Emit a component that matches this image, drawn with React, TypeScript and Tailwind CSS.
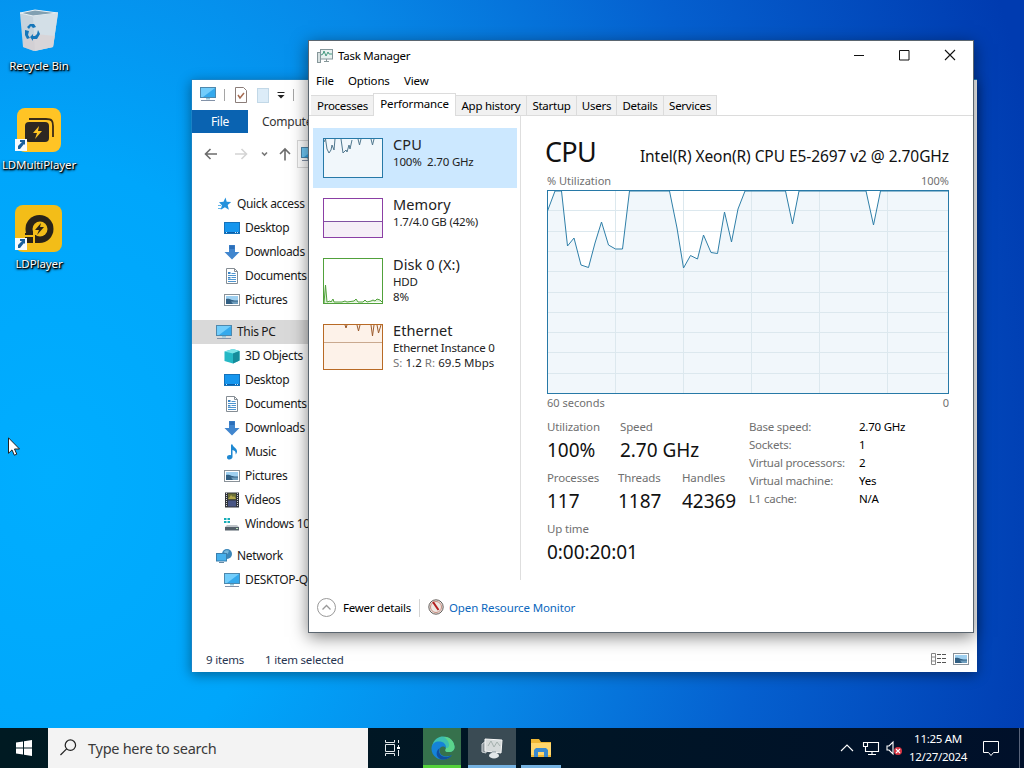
import type { ReactNode } from "react";
import clsx from "clsx";

type IconProps = { className?: string };

const UTILIZATION =
  "0.5,21 8,1 14.5,1 20.5,56 27,48 34,75 41.5,77.5 48,53 54.5,32 61.5,55 68.5,59 75.5,59 82.5,1 122.5,1 130,38 136.5,78 143.5,65.5 150.5,69 156.5,45 164,62.5 170.5,63.5 177.5,22 184.5,52 191,19 198,1 238.5,1 245.5,34 252,1 319,1 326.5,35 333.5,1 401.5,1";

function MonitorIcon({ className }: IconProps) {
  return (
    <svg viewBox="0 0 16 16" className={clsx("h-4 w-4 shrink-0", className)}>
      <rect x="0.5" y="1.5" width="15" height="10" fill="#35a9ec" stroke="#4d88ad" />
      <path d="M1 2h14L3 11H1z" fill="#72cdfb" />
      <path d="M6 12h4v1.5H6z" fill="#8fc6dc" />
      <path d="M1 14.5h14" stroke="#8392a8" />
    </svg>
  );
}

function StarIcon() {
  return (
    <svg viewBox="0 0 16 16" className="h-4 w-4 shrink-0">
      <path d="M9.5 1.5l1.2 4.2 4.5.3-3.5 3 1.2 4.8-4-2.5-4.200 2.400 1.200-4.500L3 6.300l4.500-.5z" fill="#2391dc" />
      <path d="M2 9.5h3M2 12.5h3" stroke="#63b5e9" />
    </svg>
  );
}

function DesktopIcon() {
  return (
    <svg viewBox="0 0 16 16" className="h-4 w-4 shrink-0">
      <rect x="0.5" y="2.5" width="15" height="11" fill="#1696ee" stroke="#1472bb" />
      <path d="M1 12.5h14" stroke="#0b5da8" />
      <path d="M2 12.5h1M11 12.5h1M13 12.5h1" stroke="#c8e9ff" />
    </svg>
  );
}

function DownloadIcon() {
  return (
    <svg viewBox="0 0 16 16" className="h-4 w-4 shrink-0">
      <path d="M5 1h6v7h4.5L8 15.5.5 8H5z" fill="#4186ce" />
      <path d="M5.5 1.5h5V5h-5z" fill="#2c6fb9" />
    </svg>
  );
}

function DocumentIcon() {
  return (
    <svg viewBox="0 0 16 16" className="h-4 w-4 shrink-0">
      <path d="M2.5.5h8l3 3v12h-11z" fill="#fff" stroke="#858d94" />
      <path d="M10.5 .5v3h3" fill="none" stroke="#858d94" />
      <path d="M7.5 5.5h4M4 7.5h8M7.5 9.5h4.5M4 11.5h8M4 13.5h8" stroke="#4f95cf" />
      <path d="M4 4h2.5v2H4zM4 9h2.5v1.5H4z" fill="#3b83c4" />
    </svg>
  );
}

function PictureIcon({ className }: IconProps) {
  return (
    <svg viewBox="0 0 16 16" className={clsx("h-4 w-4 shrink-0", className)}>
      <rect x="0.5" y="2.5" width="15" height="11" fill="#fff" stroke="#8a9299" />
      <rect x="2" y="4" width="12" height="8" fill="#9fd0f0" />
      <path d="M2 7c4-1 5 2 12 1.5V12H2z" fill="#315f83" />
      <path d="M7 9.5h7V12H9z" fill="#6e9dbd" />
    </svg>
  );
}

function CubeIcon() {
  return (
    <svg viewBox="0 0 16 16" className="h-4 w-4 shrink-0">
      <path d="M.5 3.5L9 1l6.5 2v9.5L9 15.5.5 13z" fill="#25b8c5" />
      <path d="M.5 3.5L9 1l6.5 2L9 5.5z" fill="#7be3e8" />
      <path d="M9 5.5L15.5 3v9.5L9 15.5z" fill="#158c9b" />
    </svg>
  );
}

function MusicIcon() {
  return (
    <svg viewBox="0 0 16 16" className="h-4 w-4 shrink-0">
      <path d="M7 .5h1.5c.5 3 5 3.5 4.5 7.5-.2 1.2-.8 2-1.5 2.5.7-3-1-4-3-4.5v7c0 3-5.5 3.5-5.5.5 0-2 2-2.8 4-2.2z" fill="#1e88d2" />
    </svg>
  );
}

function VideoIcon() {
  return (
    <svg viewBox="0 0 16 16" className="h-4 w-4 shrink-0">
      <path d="M1 0.5h14v15H1z" fill="#31343a" />
      <path d="M4 1.5h8v6H4z" fill="#6b6f36" />
      <path d="M4 8.5h8v6H4z" fill="#485584" />
      <path d="M5 6l2-3 2 2 1-1 2 3H4z" fill="#b2a64b" />
      <path d="M2.5 1v14M13.5 1v14" stroke="#d4d7da" strokeDasharray="1 1" />
    </svg>
  );
}

function DriveIcon() {
  return (
    <svg viewBox="0 0 16 16" className="h-4 w-4 shrink-0">
      <path d="M0 2h2.5v2H0zM3.5 2H6v2H3.5zM0 5h2.5v2H0zM3.5 5H6v2H3.5z" fill="#16adb8" />
      <path d="M3 9h10l2 2H1z" fill="#bfc5ca" />
      <path d="M1 11h14v3.5H1z" fill="#54606a" />
      <path d="M12 12.5h2" stroke="#b9e5b9" />
    </svg>
  );
}

function NetworkIcon() {
  return (
    <svg viewBox="0 0 16 16" className="h-4 w-4 shrink-0">
      <circle cx="11" cy="6" r="5" fill="#3a86b9" />
      <path d="M8 3.5c2-2 4-1 5-1l-1 3-3 1z" fill="#77b8dc" />
      <rect x="0.5" y="5.5" width="10" height="7.5" fill="#46b0ec" stroke="#397fae" />
      <path d="M3 14.5h5" stroke="#6589a5" />
    </svg>
  );
}

function TaskManagerIcon({ className }: IconProps) {
  return (
    <svg viewBox="0 0 16 16" className={clsx("h-4 w-4 shrink-0", className)}>
      <rect x="0.5" y="4.5" width="3" height="10" fill="#d8e1e1" stroke="#87979a" />
      <rect x="3.5" y="1.5" width="12" height="9.5" fill="#e7f1ef" stroke="#84979b" />
      <path d="M4 7l2-1 1-3 2 5 2-4 1 2h3" fill="none" stroke="#469b81" />
      <path d="M7 13.5h5M9.5 11v2" stroke="#87979a" />
    </svg>
  );
}

const sidebar: { label: string; icon: ReactNode; root?: boolean; active?: boolean }[][] = [
  [
    { label: "Quick access", icon: <StarIcon />, root: true },
    { label: "Desktop", icon: <DesktopIcon /> },
    { label: "Downloads", icon: <DownloadIcon /> },
    { label: "Documents", icon: <DocumentIcon /> },
    { label: "Pictures", icon: <PictureIcon /> },
  ],
  [
    { label: "This PC", icon: <MonitorIcon />, root: true, active: true },
    { label: "3D Objects", icon: <CubeIcon /> },
    { label: "Desktop", icon: <DesktopIcon /> },
    { label: "Documents", icon: <DocumentIcon /> },
    { label: "Downloads", icon: <DownloadIcon /> },
    { label: "Music", icon: <MusicIcon /> },
    { label: "Pictures", icon: <PictureIcon /> },
    { label: "Videos", icon: <VideoIcon /> },
    { label: "Windows 10", icon: <DriveIcon /> },
  ],
  [
    { label: "Network", icon: <NetworkIcon />, root: true },
    { label: "DESKTOP-QO", icon: <MonitorIcon /> },
  ],
];

function Explorer() {
  return (
    <div className="absolute left-[191px] top-[79px] flex h-[593px] w-[786px] flex-col border-l border-t border-[#1883c7] bg-white shadow-[0_3px_12px_rgba(0,0,0,0.4)]">
      <div className="flex h-[30px] items-center pl-2">
        <MonitorIcon className="-mt-[2px]" />
        <div className="ml-2 h-3 w-px bg-[#a5a5a5]" />
        <svg viewBox="0 0 16 16" className="ml-2 h-4 w-4">
          <path d="M2.5 .5h8l3 3v12h-11z" fill="#fff" stroke="#8b7d79" />
          <path d="M5 8l2 3 4-5" fill="none" stroke="#a56a50" strokeWidth="1.5" />
        </svg>
        <div className="ml-2 h-[15px] w-3 border border-[#c2d8e7] bg-[#dcecf8]" />
        <svg viewBox="0 0 8 8" className="ml-2 h-2 w-2">
          <path d="M0.5 1.5h7" stroke="#222" />
          <path d="M0.5 4h7L4 7.5z" fill="#222" />
        </svg>
        <div className="ml-2 h-3 w-px bg-[#a5a5a5]" />
      </div>
      <div className="flex h-[23px] text-[12px] leading-[24px] tracking-[-0.25px]">
        <div className="w-14 bg-[#0a63b1] text-center text-white">File</div>
        <div className="pl-[14px] text-[#333]">Computer</div>
      </div>
      <div className="flex h-[42px] items-center">
        <svg viewBox="0 0 105 30" className="h-[30px] w-[105px] shrink-0" fill="none" strokeWidth="1.6">
          <path d="M25 15H14M18.5 10l-5 5 5 5" stroke="#6c6c6c" />
          <path d="M43 15h11M49.5 10l5 5-5 5" stroke="#d4d4d4" />
          <path d="M70 13.5l2.5 2.5L75 13.5" stroke="#777" />
          <path d="M93 21.5V10.5M88 15l5-5 5 5" stroke="#6c6c6c" />
        </svg>
        <div className="flex h-7 w-[500px] items-center border border-[#d9d9d9] pl-[3px]">
          <MonitorIcon />
        </div>
      </div>
      <div className="flex h-[473px] w-[180px] flex-col gap-2 pt-[17px] text-[12px] tracking-[-0.34px] text-[#1a1a1a]">
        {sidebar.map((group, i) => (
          <div key={i}>
            {group.map((item) => (
              <div
                key={item.label}
                className={clsx(
                  "flex h-6 items-center gap-[5px] whitespace-nowrap",
                  item.root ? "pl-6" : "pl-8",
                  item.active && "bg-[#d9d9d9]"
                )}
              >
                {item.icon}
                <span>{item.label}</span>
              </div>
            ))}
          </div>
        ))}
      </div>
      <div className="flex h-6 items-center pl-[14px] pr-2 text-[11.5px] tracking-[-0.2px] text-[#26344f]">
        <span>9 items</span>
        <span className="ml-[21px]">1 item selected</span>
        <svg viewBox="0 0 16 14" className="-mt-[3px] ml-auto h-[14px] w-4">
          <path d="M.5 1.5h4v11h-4zM.5 5h4M.5 9h4" fill="none" stroke="#888" />
          <path d="M6 2.5h10M6 6.5h10M6 10.5h10" stroke="#555" strokeDasharray="4 1" />
        </svg>
        <PictureIcon className="-mt-[3px] ml-[6px]" />
      </div>
    </div>
  );
}

function DeviceRow({ title, lines, chart, className, selected }: {
  title: string;
  lines: ReactNode[];
  chart: ReactNode;
  className: string;
  selected?: boolean;
}) {
  return (
    <div className={clsx("flex w-[204px] gap-[10px] pl-[10px]", selected && "bg-[#cce8ff]", className)}>
      {chart}
      <div className="whitespace-pre text-[#222]">
        <div className="pb-[2px] text-[14.5px] leading-[16px] tracking-[0.1px]">{title}</div>
        {lines.map((line, i) => (
          <div key={i} className="text-[11.5px] leading-[15px] tracking-[-0.2px]">{line}</div>
        ))}
      </div>
    </div>
  );
}

function CpuChart() {
  const columns = [68.5, 136.5, 204.5, 272.5, 340.5];
  const rows = [1, 2, 3, 4, 5, 6, 7, 8, 9];
  return (
    <svg viewBox="0 0 402 204" className="h-[204px] w-[402px]">
      <polygon points={`0,203 ${UTILIZATION} 402,203`} fill="#f1f7fb" />
      {columns.map((x) => (
        <path key={x} d={`M${x} 0v203`} stroke="#dce8ee" />
      ))}
      {rows.map((n) => (
        <path key={n} d={`M0 ${Math.round(n * 20.3) + 0.5}h402`} stroke="#dce8ee" />
      ))}
      <polyline points={UTILIZATION} fill="none" stroke="#2f7fa8" />
      <rect x="0.5" y="0.5" width="401" height="203" fill="none" stroke="#2779a7" />
    </svg>
  );
}

function Stat({ label, value, className }: { label: string; value: string; className?: string }) {
  return (
    <div className={className}>
      <div className="text-[11.5px] leading-4 tracking-[-0.15px] text-[#707070]">{label}</div>
      <div className="text-[19px] leading-[30px] tracking-[-0.05px] text-[#111]">{value}</div>
    </div>
  );
}

const details = [
  ["Base speed:", "2.70 GHz"],
  ["Sockets:", "1"],
  ["Virtual processors:", "2"],
  ["Virtual machine:", "Yes"],
  ["L1 cache:", "N/A"],
];

const tabs = [
  { label: "Processes", width: "w-[62px]" },
  { label: "Performance", width: "w-[83px]", active: true },
  { label: "App history", width: "w-[71px]" },
  { label: "Startup", width: "w-[50px]" },
  { label: "Users", width: "w-[40px]" },
  { label: "Details", width: "w-[47px]" },
  { label: "Services", width: "w-[53px]" },
];

function TaskManager() {
  return (
    <div className="absolute left-[308px] top-[40px] flex h-[593px] w-[666px] flex-col border border-[#5b6670] bg-white text-[11.5px] text-black shadow-[0_4px_16px_rgba(0,0,0,0.5)]">
      <div className="flex h-[30px] items-center pl-2">
        <TaskManagerIcon />
        <span className="ml-[5px] tracking-[-0.25px]">Task Manager</span>
        <svg viewBox="0 0 120 20" className="-mt-[2px] ml-auto mr-2 h-5 w-[120px]" fill="none" stroke="#111">
          <path d="M9 10.5h10" />
          <path d="M54.5 5.5h9.500v9.500h-9.500z" />
          <path d="M100 5l10 10M110 5l-10 10" strokeWidth="1.1" />
        </svg>
      </div>
      <div className="flex h-[21px] items-center pb-[2px] pl-[7px] tracking-[-0.15px]">
        <span className="w-8">File</span>
        <span className="w-14">Options</span>
        <span>View</span>
      </div>
      <div className="flex h-6 items-end border-b border-[#dcdcdc] pl-[2px] tracking-[-0.26px]">
        {tabs.map((tab) => (
          <div
            key={tab.label}
            className={clsx(
              "border-[#dcdcdc] text-center whitespace-nowrap",
              tab.width,
              tab.active
                ? "-ml-px -mb-px h-[23px] border-x border-t bg-white leading-[19px] tracking-[-0.15px]"
                : "h-5 border-r border-t bg-[#f1f1f1] leading-[20px] first:w-[63px] first:pl-px"
            )}
          >
            {tab.label}
          </div>
        ))}
      </div>
      <div className="flex h-[467px]">
        <div className="h-[464px] w-[212px] border-r border-[#dedede] pl-1 pt-[12px]">
          <DeviceRow
            selected
            className="h-[60px] pt-2"
            title="CPU"
            lines={["100%  2.70 GHz"]}
            chart={
              <svg viewBox="0 0 60 41" className="mt-[2px] h-[41px] w-[60px]">
                <rect x="0.5" y="0.5" width="59" height="39" fill="#f1f7fb" stroke="#2779a7" />
                <path d="M1 4l1.5-3 1.5 10 2 4 2-3 1-5 2 5 1-11M18 1l2 14 3-3 1 2 2-7 1 4 2-9M35 1l1.5 6L38 1M48 1l1.5 6L51 1" fill="none" stroke="#50778e" />
              </svg>
            }
          />
          <DeviceRow
            className="mt-[3px] h-[60px] pt-[5px]"
            title="Memory"
            lines={["1.7/4.0 GB (42%)"]}
            chart={
              <svg viewBox="0 0 60 41" className="mt-[2px] h-[41px] w-[60px]">
                <rect x="0.5" y="0.5" width="59" height="39" fill="#fff" stroke="#8b3fa5" />
                <path d="M1 23.5h58V39H1z" fill="#f5eff7" />
                <path d="M1 23.5h58" stroke="#8053a2" />
              </svg>
            }
          />
          <DeviceRow
            className="h-[66px] pt-[5px]"
            title="Disk 0 (X:)"
            lines={["HDD", "8%"]}
            chart={
              <svg viewBox="0 0 60 46" className="mt-[2px] h-[46px] w-[60px]">
                <rect x="0.5" y="0.5" width="59" height="45" fill="#fff" stroke="#51a13b" />
                <path d="M1 45l1.5-18L4 44l3-1 1 1 2-3 1 3h8l3-1 2 1 7-1 2-2 2 3h5l2-2 2 2 4-1 2-1 2 1 2-2 3 1 2 2" fill="#dcf0d6" stroke="#51a13b" />
              </svg>
            }
          />
          <DeviceRow
            className="pt-[5px]"
            title="Ethernet"
            lines={[
              "Ethernet Instance 0",
              <span className="tracking-[0.03px]">
                <span className="text-[#777]">S:</span> 1.2 <span className="text-[#777]">R:</span> 69.5 Mbps
              </span>,
            ]}
            chart={
              <svg viewBox="0 0 60 46" className="mt-[2px] h-[46px] w-[60px]">
                <rect x="0.5" y="0.5" width="59" height="45" fill="#fdf2e9" stroke="#b86a25" />
                <path d="M1 18.5h58" stroke="#c9a98f" />
                <path d="M22 1l1 3 1-3M34 1l1.5 6L37 1M48 1l1.5 11L51 1M54 1l1.5 8L58 1" fill="none" stroke="#9b5b2d" />
              </svg>
            }
          />
        </div>
        <div className="w-[428px] pl-[26px] pt-[18px]">
          <div className="-ml-[2px] flex h-9 w-[404px] items-baseline justify-between whitespace-nowrap text-[#111]">
            <span className="text-[27px] leading-[36px] tracking-[-0.7px]">CPU</span>
            <span className="text-[15.5px] tracking-[-0.07px]">Intel(R) Xeon(R) CPU E5-2697 v2 @ 2.70GHz</span>
          </div>
          <div className="flex h-5 w-[402px] items-center justify-between pt-[2px] text-[11px] text-[#707070]">
            <span>% Utilization</span>
            <span>100%</span>
          </div>
          <CpuChart />
          <div className="flex h-5 w-[402px] items-center justify-between pb-[2px] text-[11px] text-[#707070]">
            <span>60 seconds</span>
            <span>0</span>
          </div>
          <div className="mt-1 flex w-[402px]">
            <div className="w-[202px] pt-px whitespace-nowrap">
              <div className="flex h-[51px]">
                <Stat label="Utilization" value="100%" className="w-[73px]" />
                <Stat label="Speed" value="2.70 GHz" />
              </div>
              <div className="flex h-[51px]">
                <Stat label="Processes" value="117" className="w-[71px]" />
                <Stat label="Threads" value="1187" className="w-[64px]" />
                <Stat label="Handles" value="42369" />
              </div>
              <Stat label="Up time" value="0:00:20:01" />
            </div>
            <div className="text-[11.5px] leading-[18px] tracking-[-0.23px] whitespace-nowrap">
              {details.map(([label, value]) => (
                <div key={label} className="flex">
                  <span className="w-[110px] text-[#707070]">{label}</span>
                  <span>{value}</span>
                </div>
              ))}
            </div>
          </div>
        </div>
      </div>
      <div className="flex h-[49px] items-center pl-[7px]">
        <svg viewBox="0 0 20 20" className="h-5 w-5" fill="none" stroke="#999">
          <circle cx="10.5" cy="9.5" r="9" />
          <path d="M6.5 11.5l4-4 4 4" strokeWidth="1.3" />
        </svg>
        <span className="ml-[7px] w-[69px] whitespace-nowrap tracking-[-0.23px]">Fewer details</span>
        <div className="ml-[7px] h-[18px] w-px bg-[#d4d4d4]" />
        <svg viewBox="0 0 16 16" className="-mt-px ml-2 h-4 w-4">
          <circle cx="8" cy="8" r="7.2" fill="#eee8e3" stroke="#655f5c" />
          <circle cx="8" cy="8" r="5.5" fill="none" stroke="#c78c80" />
          <path d="M5 3l5.5 8" stroke="#b41f20" strokeWidth="2" />
        </svg>
        <span className="ml-[5px] tracking-[-0.12px] text-[#0c67bd]">Open Resource Monitor</span>
      </div>
    </div>
  );
}

function Shortcut() {
  return (
    <>
      <path d="M0 34h12v12H0z" fill="#f7fbff" />
      <path d="M3 44v-3l4-4H5v-2h5v5l-1-1-4 5z" fill="#195f9b" />
    </>
  );
}

function DesktopIcons() {
  return (
    <div className="absolute left-0 top-[7px] flex w-[78px] flex-col text-center text-[11.5px] leading-[18px] tracking-[-0.1px] text-white [text-shadow:1px_1px_1px_#000,1px_1px_2px_#000,0_1px_3px_#000]">
      <div className="flex h-[98px] flex-col items-center">
        <svg viewBox="0 0 48 48" className="h-12 w-12">
          <path d="M5 6l15-3 23 3-5 34-19 4-11-4z" fill="#c5d3dd" />
          <path d="M5 6l13 3 25-3-23-3z" fill="#81a0b2" stroke="#e8eff3" />
          <path d="M18 9l25-3-5 34-18 4z" fill="#d3dfe7" />
          <path d="M9 32l11-5 20 2-2 11-19 4-11-4z" fill="#dccfce" opacity=".6" />
          <path d="M12 20l3-3h4l2 3-3 1-2-2-2 3zM10 23l4 1-1 4 2 3-3 1-2-4zM23 23l2 4-3 5h-4v2l-3-4 3-3v2h2l2-2z" fill="#1677ba" />
        </svg>
        <span className="mt-[2px]">Recycle Bin</span>
      </div>
      <div className="flex h-[99px] flex-col items-center">
        <svg viewBox="0 0 48 48" className="h-12 w-12">
          <rect x="2" y="3" width="44" height="44" rx="8" fill="#ffc425" />
          <path d="M14 14h17c6 0 7 2 7 7v11" fill="none" stroke="#3a2b17" strokeWidth="1.8" />
          <rect x="10" y="17" width="24" height="20" rx="4" fill="#2d2722" />
          <path d="M24 21l-6 7h4l-2 6 7-8h-4z" fill="#ffc425" />
          <Shortcut />
        </svg>
        <span className="mt-[3px] whitespace-nowrap">LDMultiPlayer</span>
      </div>
      <div className="flex flex-col items-center">
        <svg viewBox="0 0 48 48" className="h-12 w-12">
          <rect x="0" y="1" width="47" height="47" rx="8" fill="#f3bd18" />
          <circle cx="24.5" cy="25" r="14" fill="#292319" />
          <path d="M10 29h14v10H10z" fill="#292319" />
          <circle cx="25" cy="25" r="7.5" fill="#f3bd18" />
          <path d="M19 28v12M10 32h9" stroke="#f3bd18" strokeWidth="2" />
          <path d="M26 19l-6 7h4l-2 5 7-8h-4z" fill="#292319" />
          <Shortcut />
        </svg>
        <span className="mt-[3px]">LDPlayer</span>
      </div>
    </div>
  );
}

function Taskbar() {
  return (
    <div className="absolute bottom-0 left-0 flex h-10 w-full bg-gradient-to-r from-[#001a22] via-[#001625] to-[#00102a]">
      <div className="flex w-12 items-center justify-center">
        <svg viewBox="0 0 16 16" className="h-4 w-4" fill="#fff">
          <path d="M0 2.5l7-1v6H0zM8 1.3L16 0v7.5H8zM0 8.5h7v6l-7-1zM8 8.5h8V16l-8-1.3z" />
        </svg>
      </div>
      <div className="flex w-80 items-center bg-[#f3f3f3] pl-3 pt-px text-[14.5px] tracking-[-0.27px] text-[#3a3a3a]">
        <svg viewBox="0 0 18 18" className="-mt-[2px] mr-[11px] h-[17px] w-[17px]" fill="none" stroke="#222" strokeWidth="1.3">
          <circle cx="11" cy="6.5" r="5.5" />
          <path d="M7 10.5L.5 17" />
        </svg>
        Type here to search
      </div>
      <div className="flex w-12 items-center justify-center">
        <svg viewBox="0 0 18 18" className="h-[18px] w-[18px]" fill="none" stroke="#e3e9eb">
          <path d="M2.5 5.5h9v7h-9zM2.5 1v2.5h9V1M2.5 17v-2.5h9V17M15.5 1v3M15.5 6v2M15.5 11v6" />
          <path d="M14 8h3v2h-3z" fill="#fff" stroke="none" />
        </svg>
      </div>
      <div className="ml-[7px] flex w-[38px] items-center justify-center border-b-[3px] border-[#55d13b] bg-[#36714c]">
        <svg viewBox="0 0 24 24" className="ml-px mt-[2px] h-6 w-6">
          <path d="M1 11C2 3 8 .5 12 .5c7 0 11 5 11.5 10 .3 4-3 6-7 5.5-3-.4-2-2-1.5-4C14 7 5 5 1 11z" fill="#3dbfb0" />
          <path d="M13 1c7 0 10 5 10.5 9.5.3 4-3 6-7 5.5-3-.4-2-2-1.5-4 4 1 5-6-2-11z" fill="#5bd58b" />
          <path d="M.5 12C1 6 6 5 9 5.5c4 .5 6 3 6 6.5-3-3-7-1-6.5 3 .5 5 6 7 12.5 4-4 5-11 6-16 2.5C2 19 .3 16 .5 12z" fill="#1583d8" />
          <path d="M9 12c-2 2-1 6 2 8 3 2 7 1 10-1-3 4-8 5.5-12 4-5-3-4-9 0-11z" fill="#124f9e" />
        </svg>
      </div>
      <div className="ml-[7px] flex w-12 items-center justify-center border-b-[3px] border-[#75b2e1] bg-[#3a4b54]">
        <svg viewBox="0 0 24 24" className="mt-[2px] h-6 w-6">
          <path d="M2 8l4-3v12l-4-1z" fill="#899398" stroke="#cdd3d6" />
          <path d="M5 3l17 1-1 13-16-2z" fill="#d5dada" stroke="#f7f8f8" />
          <path d="M8 10l3-5 3 6 3-5 3 4" fill="none" stroke="#a5b1ae" />
          <path d="M12 15h4v3h-4z" fill="#aeb8bc" />
          <ellipse cx="14" cy="19.5" rx="5" ry="3" fill="#e2e7e9" />
        </svg>
      </div>
      <div className="ml-[5px] flex w-10 items-center justify-center border-b-[3px] border-[#75b2e1]">
        <svg viewBox="0 0 22 20" className="mt-[3px] h-5 w-[22px]">
          <path d="M1 1h8l2 3h10v15H1z" fill="#efb735" />
          <path d="M1 5h20v12H1z" fill="#ffd66c" />
          <path d="M4 19v-7l2-2h10l2 2v7h-4v-5H8v5z" fill="#3989cf" />
        </svg>
      </div>
      <div className="ml-auto flex items-center text-white">
        <svg viewBox="0 0 62 20" className="h-5 w-[62px]" fill="none" stroke="#fff" strokeWidth="1.1">
          <path d="M1 13l6-6 6 6" />
          <path d="M28 4.5h10.5v9H27M32 13.5v3M28 16.5h8M23.5 4.5h4v4h-4zM25.5 8.5v5h2" />
          <path d="M47 8h2l4-4v12l-4-4h-2z" />
          <circle cx="58" cy="13" r="4" fill="#d83442" stroke="none" />
          <path d="M56 11l4 4M60 11l-4 4" />
        </svg>
        <div className="ml-[6px] w-[60px] whitespace-nowrap text-center text-[11.5px] leading-[18px] tracking-[-0.3px]">
          <div>11:25 AM</div>
          <div>12/27/2024</div>
        </div>
        <svg viewBox="0 0 18 18" className="ml-[14px] h-[18px] w-[18px]" fill="none" stroke="#fff">
          <path d="M1.5 2.5h15v11h-5l-2.5 3-2.5-3h-5z" />
        </svg>
        <div className="ml-[19px] mr-1 h-10 w-px bg-[#59647a]" />
      </div>
    </div>
  );
}

export default function App() {
  return (
    <div className="relative h-[768px] w-[1024px] overflow-hidden bg-[radial-gradient(ellipse_1020px_1300px_at_5%_62%,#00aeff_0%,#00a6fb_24%,#0788e7_46%,#0560cf_70%,#003bb0_100%)] font-['Noto_Sans','Open_Sans',sans-serif]">
      <DesktopIcons />
      <Explorer />
      <TaskManager />
      <Taskbar />
      <svg viewBox="0 0 12 19" className="absolute left-2 top-[437px] h-[19px] w-3">
        <path d="M.5 .8v15.5l3.5-3.4 2.3 5.3 2.5-1-2.3-5.2h5z" fill="#fff" stroke="#222" />
      </svg>
    </div>
  );
}
